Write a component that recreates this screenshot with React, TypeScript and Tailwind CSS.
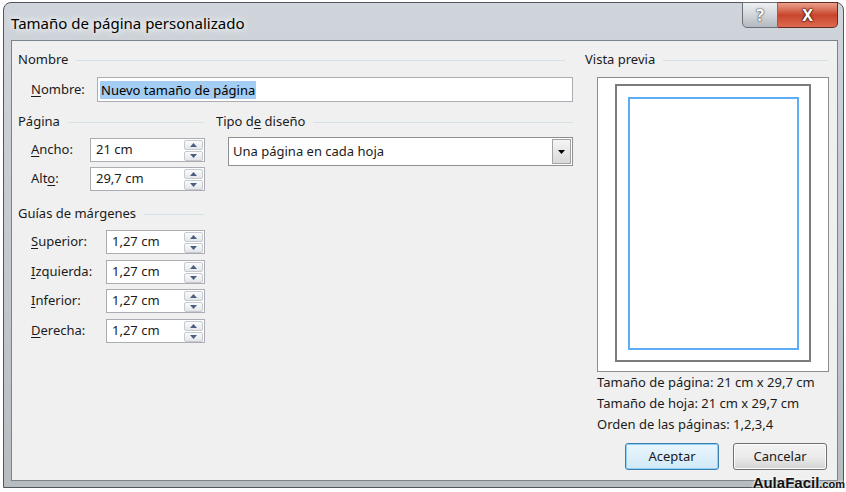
import React from 'react';

// Diálogo "Tamaño de página personalizado" (estilo Windows 7)

function Mnemonic({ text, at }: { text: string; at: number }) {
  return (
    <span className="whitespace-nowrap">
      {text.slice(0, at)}
      <span className="underline decoration-1 underline-offset-2">{text[at]}</span>
      {text.slice(at + 1)}
    </span>
  );
}

function GroupTitle({ children, className = '' }: { children: React.ReactNode; className?: string }) {
  return (
    <div className={`flex h-[16px] items-center ${className}`}>
      <span className="whitespace-nowrap">{children}</span>
      <div className="ml-[8px] h-px flex-1 bg-[#d5dfe6]" />
    </div>
  );
}

function Arrow({ up, color = '#4a5e80' }: { up?: boolean; color?: string }) {
  return (
    <svg width="7" height="4" viewBox="0 0 7 4">
      {up ? <polygon points="0,4 7,4 3.5,0" fill={color} /> : <polygon points="0,0 7,0 3.5,4" fill={color} />}
    </svg>
  );
}

function Spinner({ value, width }: { value: string; width: string }) {
  return (
    <div className={`flex h-[24px] ${width} items-center border border-[#abadb3] bg-white pl-[5px] pr-px`}>
      <span className="flex-1 whitespace-nowrap">{value}</span>
      <div className="flex flex-col gap-px">
        <div className="flex h-[10px] w-[19px] items-center justify-center rounded-[2px] border border-[#c6cad0] bg-linear-to-b from-[#fbfbfb] to-[#e4e6e9]">
          <Arrow up />
        </div>
        <div className="flex h-[10px] w-[19px] items-center justify-center rounded-[2px] border border-[#c6cad0] bg-linear-to-b from-[#fbfbfb] to-[#e4e6e9]">
          <Arrow />
        </div>
      </div>
    </div>
  );
}

function FieldRow({ label, value, width, className = '' }: { label: React.ReactNode; value: string; width: string; className?: string }) {
  return (
    <div className={`flex items-center justify-between pl-[13px] ${className}`}>
      {label}
      <Spinner value={value} width={width} />
    </div>
  );
}

export default function App() {
  return (
    <div className="relative h-[492px] w-[846px] overflow-hidden bg-white font-['Noto_Sans',sans-serif] text-[13px] text-[#1b1b1b]">
      <div className="ml-[3px] mt-[2px] flex h-[486px] w-[841px] flex-col rounded-t-[8px] border border-[#50565c] bg-linear-to-b from-[#cfd5db] via-[#c3c9cf] to-[#b7bcc1] pb-[6px] pl-[7px] pr-[5px]">
        {/* Barra de título */}
        <div className="flex h-[37px] items-start justify-between">
          <div className="pt-[11px] text-[15px] leading-[18px] text-black [text-shadow:0_0_6px_#ffffff,0_0_10px_#ffffff]">
            Tamaño de página personalizado
          </div>
          <div className="-mt-px flex">
            <div className="flex h-[26px] w-[36px] items-center justify-center rounded-bl-[5px] border border-[#6a7077] bg-linear-to-b from-[#eef0f2] via-[#d2d6da] to-[#b4b9bf] text-[16px] font-bold leading-none text-white [text-shadow:0_0_1px_#333,0_0_2px_#333]">
              ?
            </div>
            <div className="flex h-[26px] w-[60px] items-center justify-center rounded-br-[5px] border border-l-0 border-[#6b2a1f] bg-linear-to-b from-[#eaa08c] via-[#c9452e] to-[#dc6a4f] text-[16px] font-bold leading-none text-white [text-shadow:0_0_1px_#3b0d06,0_0_2px_#3b0d06,0_0_2px_#3b0d06]">
              X
            </div>
          </div>
        </div>

        {/* Área de cliente */}
        <div className="flex flex-1 gap-[12px] border border-[#7b838b] bg-[#f0f0f0] pl-[6px] pt-[11px]">
          {/* Columna izquierda */}
          <div className="w-[555px]">
            <GroupTitle className="pr-[8px]">Nombre</GroupTitle>
            <div className="mt-[9px] flex items-center">
              <div className="w-[79px] pl-[13px]">
                <Mnemonic text="Nombre:" at={0} />
              </div>
              <div className="flex h-[25px] flex-1 items-center border border-[#abadb3] bg-white pl-[2px]">
                <span className="bg-[#a4cdf3] px-px leading-[18px] text-black">Nuevo tamaño de página</span>
              </div>
            </div>

            <div className="mt-[12px] flex gap-[11px]">
              <div className="w-[187px]">
                <GroupTitle className="pr-px">Página</GroupTitle>
                <FieldRow className="mt-[8px]" label={<Mnemonic text="Ancho:" at={0} />} value="21 cm" width="w-[115px]" />
                <FieldRow className="mt-[5px]" label={<Mnemonic text="Alto:" at={3} />} value="29,7 cm" width="w-[115px]" />

                <GroupTitle className="mt-[15px] pr-px">Guías de márgenes</GroupTitle>
                <FieldRow className="mt-[8px]" label={<Mnemonic text="Superior:" at={0} />} value="1,27 cm" width="w-[99px]" />
                <FieldRow className="mt-[6px]" label={<Mnemonic text="Izquierda:" at={0} />} value="1,27 cm" width="w-[99px]" />
                <FieldRow className="mt-[5px]" label={<Mnemonic text="Inferior:" at={0} />} value="1,27 cm" width="w-[99px]" />
                <FieldRow className="mt-[6px]" label={<Mnemonic text="Derecha:" at={0} />} value="1,27 cm" width="w-[99px]" />
              </div>

              <div className="flex-1">
                <GroupTitle>
                  <Mnemonic text="Tipo de diseño" at={6} />
                </GroupTitle>
                <div className="ml-[12px] mt-[7px] flex h-[29px] items-center border border-[#8e8f8f] bg-white pl-[4px] pr-px">
                  <span className="flex-1">Una página en cada hoja</span>
                  <div className="flex h-[25px] w-[19px] items-center justify-center border border-[#a3a3a3] bg-linear-to-b from-[#f5f5f5] to-[#d9d9d9]">
                    <Arrow color="#000000" />
                  </div>
                </div>
              </div>
            </div>
          </div>

          {/* Columna derecha: vista previa */}
          <div className="w-[244px]">
            <GroupTitle className="pr-px">Vista previa</GroupTitle>
            <div className="ml-[12px] mt-[9px] h-[295px] border border-[#8d8d8d] bg-white px-[17px] pb-[9px] pt-[6px]">
              <div className="h-full border-2 border-[#7c7c7c] pb-[10px] pl-[11px] pr-[10px] pt-[11px]">
                <div className="h-full border-2 border-[#5eabf6]" />
              </div>
            </div>
            <div className="pl-[12px] leading-[21px]">
              <div>Tamaño de página: 21 cm x 29,7 cm</div>
              <div>Tamaño de hoja: 21 cm x 29,7 cm</div>
              <div>Orden de las páginas: 1,2,3,4</div>
            </div>
            <div className="mt-[8px] flex justify-end gap-[14px] pr-[2px]">
              <div className="flex h-[27px] w-[94px] items-center justify-center rounded-[3px] border border-[#3c7fb1] bg-linear-to-b from-[#eaf6fd] to-[#d1e9f8] shadow-[inset_0_0_0_1px_#8fd0f4]">
                Aceptar
              </div>
              <div className="flex h-[27px] w-[94px] items-center justify-center rounded-[3px] border border-[#707070] bg-linear-to-b from-[#f2f2f2] via-[#ebebeb] to-[#d4d4d4] shadow-[inset_0_0_0_1px_#fcfcfc]">
                Cancelar
              </div>
            </div>
          </div>
        </div>
      </div>

      {/* Marca de agua */}
      <div className="absolute bottom-[-2px] right-[1px] font-['Liberation_Sans',sans-serif] font-bold text-[#111] [text-shadow:0_0_2px_#fff,0_0_3px_#fff]">
        <span className="text-[15px]">AulaFacil</span>
        <span className="text-[11px]">.com</span>
      </div>
    </div>
  );
}
